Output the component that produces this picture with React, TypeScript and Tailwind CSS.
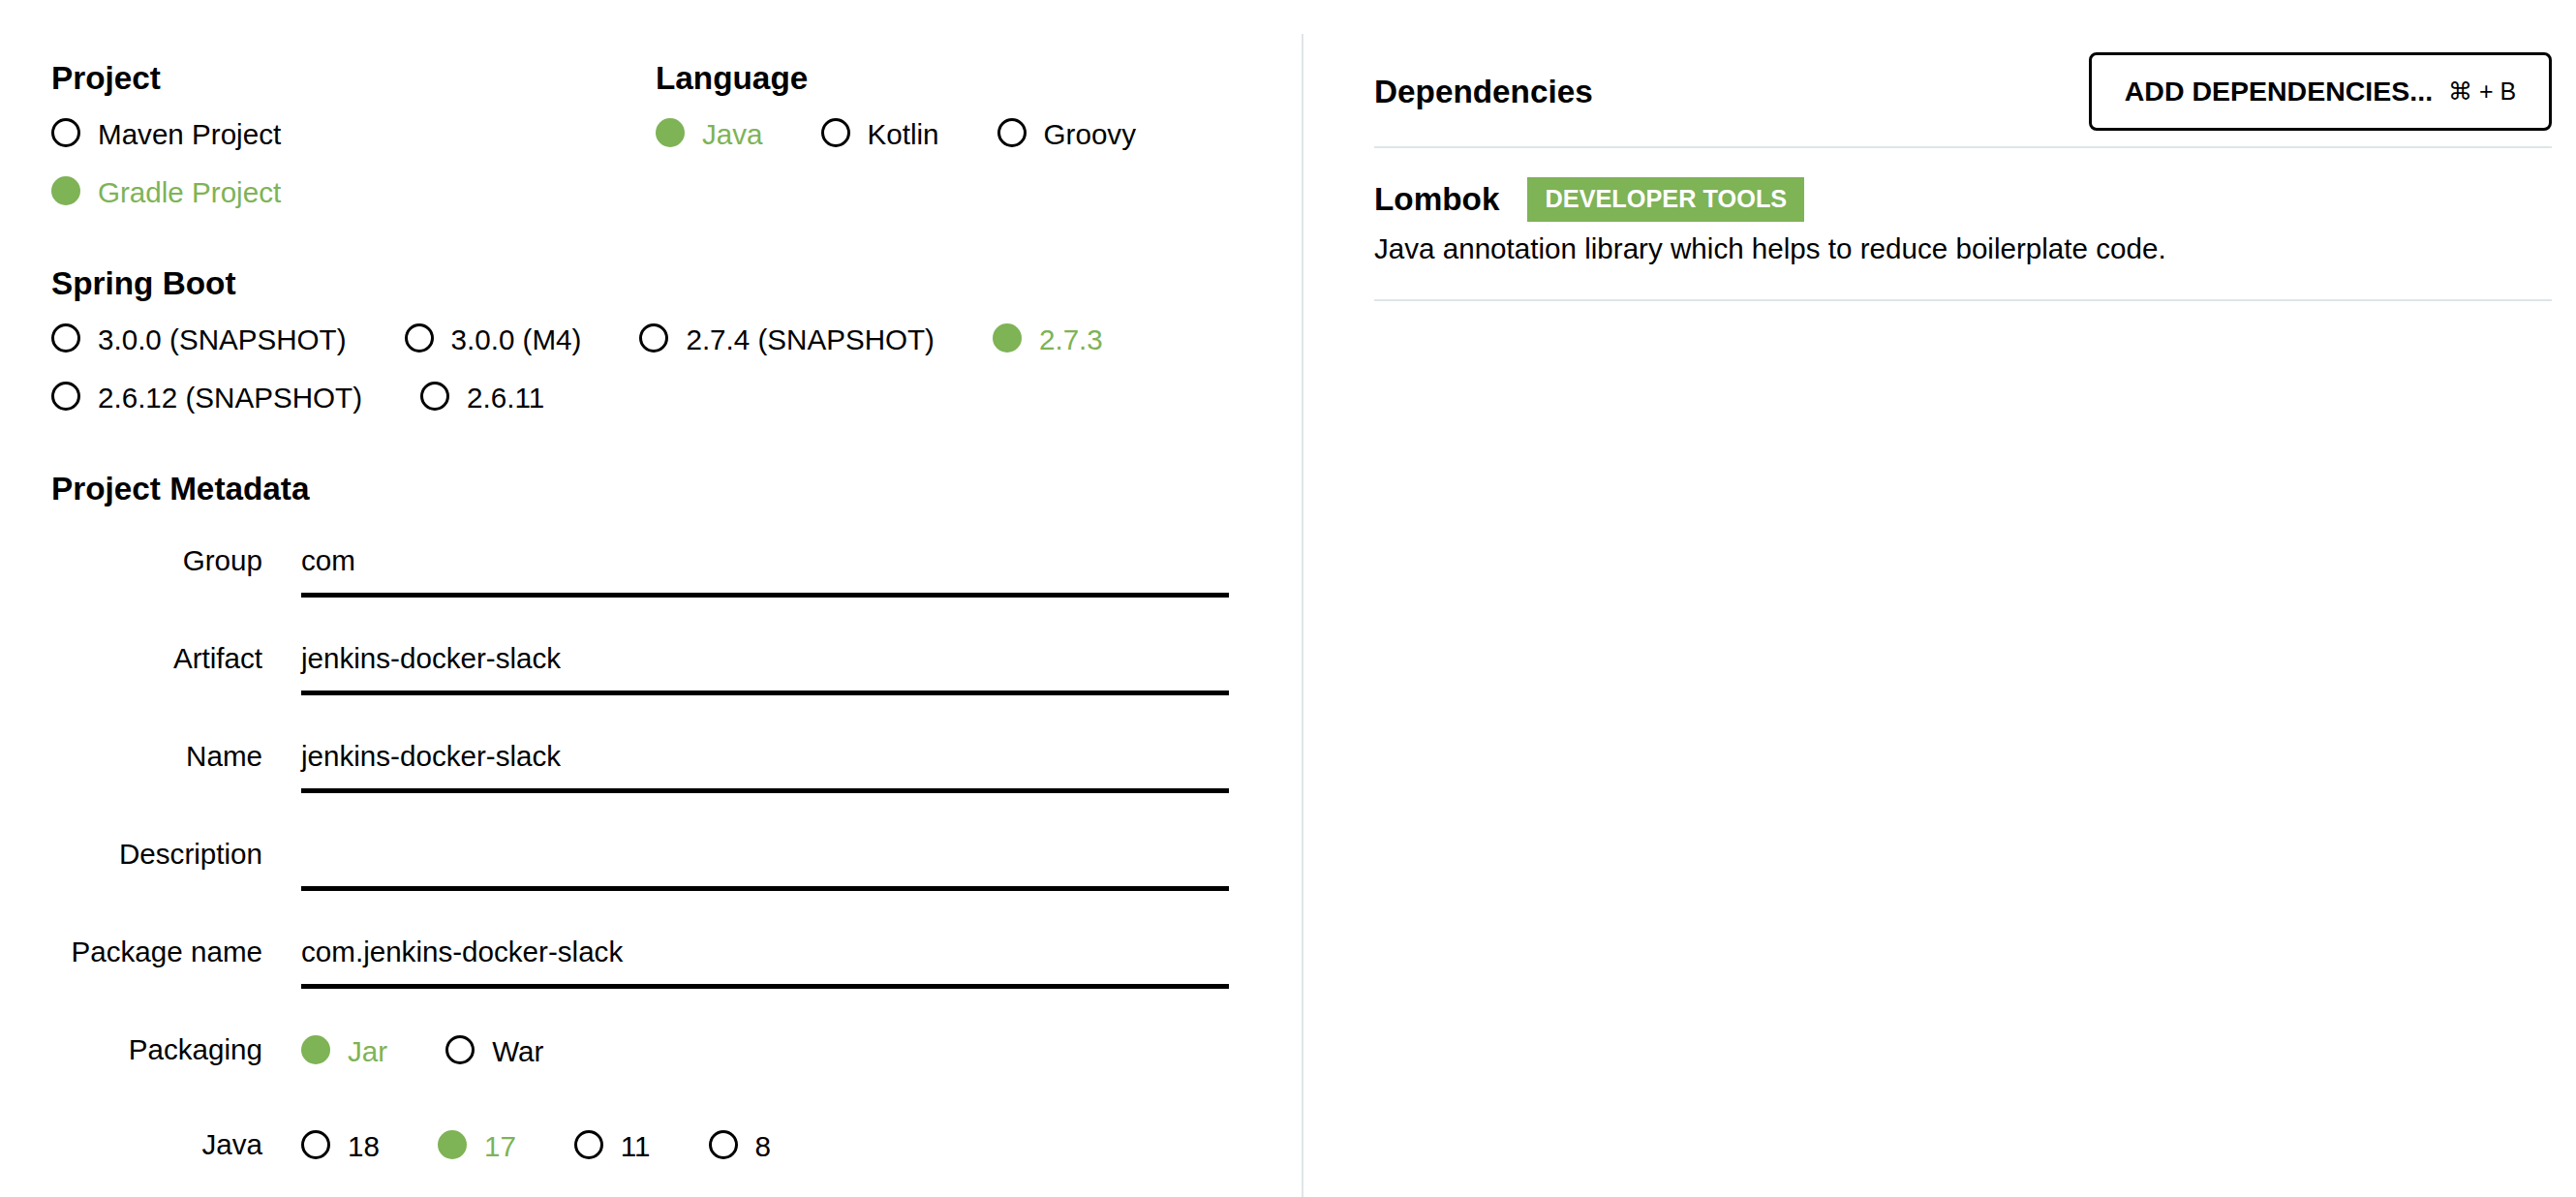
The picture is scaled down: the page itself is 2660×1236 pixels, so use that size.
type RadioProps = {
  label: string
  checked?: boolean
  tall?: boolean
}

function Radio({ label, checked, tall = true }: RadioProps) {
  return (
    <div className={`flex items-center gap-[18px] ${tall ? 'h-[60px]' : 'h-[30px]'}`}>
      {checked ? (
        <span className="w-[30px] h-[30px] rounded-full bg-[#7eb356] shrink-0" />
      ) : (
        <span className="w-[30px] h-[30px] rounded-full border-[3.5px] border-black shrink-0" />
      )}
      <span className={`mt-[3px] leading-[30px] whitespace-nowrap ${checked ? 'text-[#7eb356]' : 'text-black'}`}>
        {label}
      </span>
    </div>
  )
}

function Heading({ children }: { children: React.ReactNode }) {
  return <h2 className="text-[33.3px] font-bold leading-[40px]">{children}</h2>
}

function Field({ label, value }: { label: string; value: string }) {
  return (
    <div className="flex items-start h-[101px]">
      <div className="w-[218px] text-right pt-[17px] leading-[30px] shrink-0">{label}</div>
      <div className="ml-[40px] w-[958px] pt-[17px] pb-[18px] border-b-[5px] border-black leading-[30px] h-[70px]">
        {value}
      </div>
    </div>
  )
}

export default function App() {
  const bootVersions = [
    { label: '3.0.0 (SNAPSHOT)' },
    { label: '3.0.0 (M4)' },
    { label: '2.7.4 (SNAPSHOT)' },
    { label: '2.7.3', checked: true },
    { label: '2.6.12 (SNAPSHOT)' },
    { label: '2.6.11' },
  ]

  return (
    <div className="flex w-full min-h-[1236px] bg-white text-black text-[29.6px] font-['Liberation_Sans',Arial,sans-serif]">
      {/* Left: project settings */}
      <div className="w-[1344px] shrink-0 pl-[53px] pr-[75px] pt-[61px]">
        <div className="flex">
          <div className="w-[624px]">
            <div className="mb-[6px]">
              <Heading>Project</Heading>
            </div>
            <Radio label="Maven Project" />
            <Radio label="Gradle Project" checked />
          </div>
          <div>
            <div className="mb-[6px]">
              <Heading>Language</Heading>
            </div>
            <div className="flex gap-x-[60px]">
              <Radio label="Java" checked />
              <Radio label="Kotlin" />
              <Radio label="Groovy" />
            </div>
          </div>
        </div>

        <div className="mt-[46px] mb-[6px]">
          <Heading>Spring Boot</Heading>
        </div>
        <div className="flex flex-wrap gap-x-[60px]">
          {bootVersions.map((v) => (
            <Radio key={v.label} label={v.label} checked={v.checked} />
          ))}
        </div>

        <div className="mt-[46px] mb-[22px]">
          <Heading>Project Metadata</Heading>
        </div>
        <Field label="Group" value="com" />
        <Field label="Artifact" value="jenkins-docker-slack" />
        <Field label="Name" value="jenkins-docker-slack" />
        <Field label="Description" value="" />
        <Field label="Package name" value="com.jenkins-docker-slack" />

        <div className="flex items-start h-[98px]">
          <div className="w-[218px] text-right pt-[17px] leading-[30px] shrink-0">Packaging</div>
          <div className="ml-[40px] pt-[17px] flex gap-x-[60px]">
            <Radio label="Jar" checked tall={false} />
            <Radio label="War" tall={false} />
          </div>
        </div>
        <div className="flex items-start">
          <div className="w-[218px] text-right pt-[17px] leading-[30px] shrink-0">Java</div>
          <div className="ml-[40px] pt-[17px] flex gap-x-[60px]">
            <Radio label="18" tall={false} />
            <Radio label="17" checked tall={false} />
            <Radio label="11" tall={false} />
            <Radio label="8" tall={false} />
          </div>
        </div>
      </div>

      {/* Divider */}
      <div className="w-[2px] shrink-0 mt-[35px] bg-[#dde6e8]" />

      {/* Right: dependencies */}
      <div className="flex-1 pl-[73px] pr-[25px] pt-[54px]">
        <div className="flex items-center justify-between pb-[16px] border-b-2 border-[#dde6e8]">
          <Heading>Dependencies</Heading>
          <button className="w-[478px] h-[81px] border-[3.5px] border-black rounded-[8px] flex items-center justify-center bg-white">
            <span className="text-[28.5px] font-bold leading-none">ADD DEPENDENCIES...</span>
            <span className="ml-[16px] text-[25px] leading-none font-['Liberation_Sans','DejaVu_Sans',sans-serif]">⌘ + B</span>
          </button>
        </div>

        <div className="pt-[30px] pb-[34px] border-b-2 border-[#dde6e8]">
          <div className="flex items-center">
            <span className="text-[33.3px] font-bold leading-[40px]">Lombok</span>
            <span className="ml-[29px] h-[46px] px-[18px] flex items-center bg-[#7eb356] text-white font-bold text-[25.3px]">
              DEVELOPER TOOLS
            </span>
          </div>
          <p className="mt-[10px] leading-[36px]">Java annotation library which helps to reduce boilerplate code.</p>
        </div>
      </div>
    </div>
  )
}
